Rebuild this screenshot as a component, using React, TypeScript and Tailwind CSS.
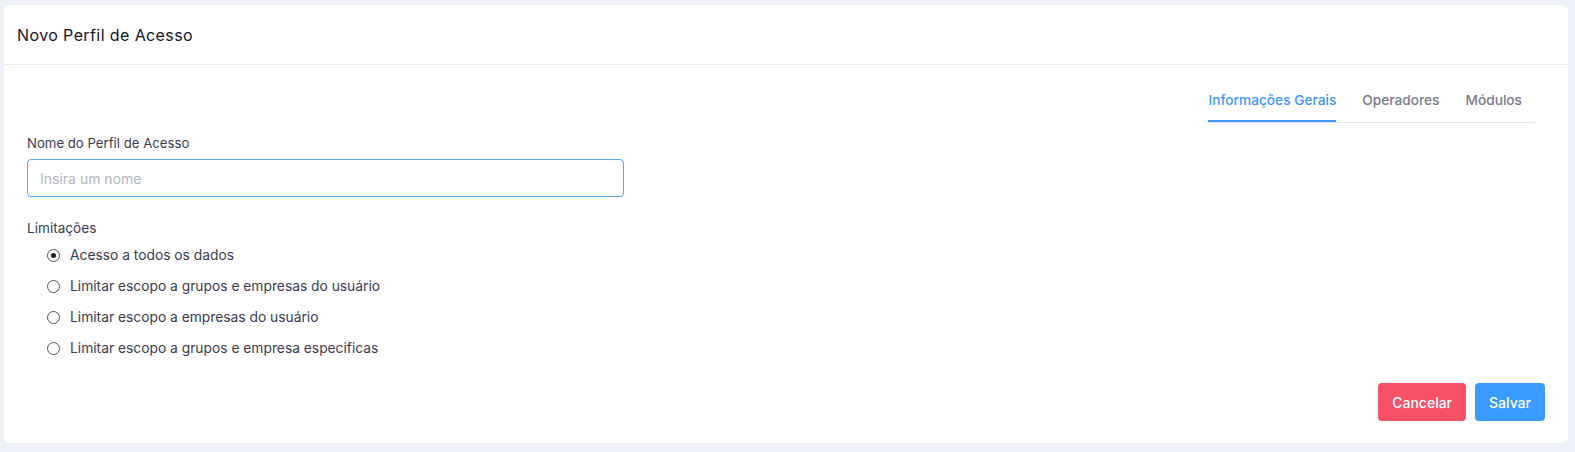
import { useState } from "react";

const options = [
  "Acesso a todos os dados",
  "Limitar escopo a grupos e empresas do usuário",
  "Limitar escopo a empresas do usuário",
  "Limitar escopo a grupos e empresa especificas",
];

const tabs = ["Informações Gerais", "Operadores", "Módulos"];

export default function App() {
  const [selected, setSelected] = useState(0);
  const [tab, setTab] = useState(0);

  return (
    <div
      className="min-h-[452px] bg-[#eef1f7] pt-[5px] pl-[4px] pr-[7px] pb-[9px]"
      style={{ fontFamily: "Inter, 'Noto Sans', sans-serif" }}
    >
      <div className="bg-white rounded-[6px] h-[438px] flex flex-col">
        {/* cabeçalho */}
        <div className="h-[60px] flex items-center px-[13px] border-b border-[#e8ebf2]">
          <h1 className="text-[16px] tracking-[0.4px] text-[#14142b] font-normal">Novo Perfil de Acesso</h1>
        </div>

        <div className="flex-1 flex flex-col px-[23px] pb-[22px]">
          <div className="flex justify-end pt-[25px] pr-[10px]">
            <div className="flex gap-[26px] border-b border-[#e3e5ea] pr-[13px]">
              {tabs.map((t, i) => (
                <button
                  key={t}
                  onClick={() => setTab(i)}
                  className={
                    i === tab
                      ? "text-[13.7px] font-medium text-[#4096ff] h-[32px] pb-[12px] border-b-2 border-[#4096ff] -mb-px leading-[20px]"
                      : "text-[13.7px] font-medium text-[#7a7a8c] h-[32px] pb-[12px] leading-[20px]"
                  }
                >
                  {t}
                </button>
              ))}
            </div>
          </div>

          <label className="mt-[11px] text-[13.2px] text-[#3b3b4f] leading-[18px]">Nome do Perfil de Acesso</label>
          <input
            autoFocus
            placeholder="Insira um nome"
            className="mt-[7px] w-[597px] h-[38px] rounded-[4px] border border-[#5aa7f5] px-[12px] text-[14px] text-[#333] placeholder:text-[#b4b4be] outline-none"
          />

          <div className="mt-[22px] text-[13.6px] text-[#3b3b4f] leading-[18px]">Limitações</div>
          <div className="mt-[9px] flex flex-col gap-[13px] pl-[20px]">
            {options.map((o, i) => (
              <label key={o} className="flex items-center gap-[10px] cursor-pointer h-[18px]" onClick={() => setSelected(i)}>
                <span className="w-[13px] h-[13px] rounded-full border border-[#555] flex items-center justify-center">
                  {selected === i && <span className="w-[5px] h-[5px] rounded-full bg-[#222]" />}
                </span>
                <span className="text-[13.8px] text-[#3b3b4f]">{o}</span>
              </label>
            ))}
          </div>

          <div className="mt-auto flex justify-end gap-[9px]">
            <button className="h-[38px] px-[14px] rounded-[4px] bg-[#f65165] text-white text-[14px] font-medium">
              Cancelar
            </button>
            <button className="h-[38px] px-[14px] rounded-[4px] bg-[#3a9bff] text-white text-[14px] font-medium">
              Salvar
            </button>
          </div>
        </div>
      </div>
    </div>
  );
}
